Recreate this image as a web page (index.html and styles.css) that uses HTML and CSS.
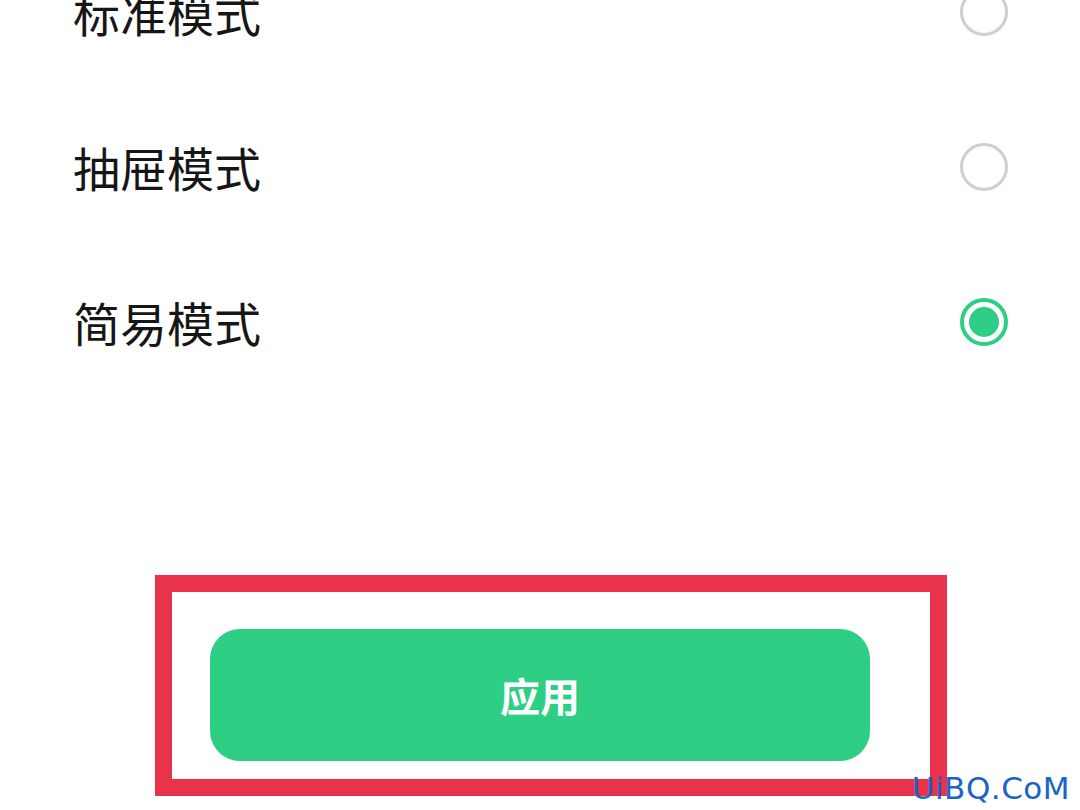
FILE: index.html
```html
<!DOCTYPE html>
<html lang="zh-CN">
<head>
    <meta charset="UTF-8">
    <title>模式选择</title>
    <link rel="stylesheet" href="styles.css">
</head>
<body>
    <div class="screen">
        <ul class="mode-list">
            <li class="mode-item">
                <span class="mode-name">标准模式</span>
                <span class="radio"></span>
            </li>
            <li class="mode-item">
                <span class="mode-name">抽屉模式</span>
                <span class="radio"></span>
            </li>
            <li class="mode-item">
                <span class="mode-name">简易模式</span>
                <span class="radio checked"></span>
            </li>
        </ul>

        <div class="apply-frame">
            <button class="apply-button">应用</button>
        </div>

        <div class="watermark">UiBQ.CoM</div>
    </div>
</body>
</html>
```

FILE: styles.css
```css
* {
    box-sizing: border-box;
    margin: 0;
    padding: 0;
}

body {
    background: #fff;
    font-family: "Noto Sans CJK SC", "Noto Sans", sans-serif;
    width: 1080px;
    height: 810px;
    overflow: hidden;
}

.screen {
    position: relative;
    height: 810px;
    overflow: hidden;
}

.mode-list {
    list-style: none;
    margin-top: -66px;
    padding: 0 72px 0 73px;
}

.mode-item {
    display: flex;
    justify-content: space-between;
    align-items: center;
    height: 155px;
}

.mode-name {
    font-size: 47px;
    color: #161616;
}

.radio {
    width: 48px;
    height: 48px;
    border-radius: 50%;
    border: 3px solid #cfcfcf;
    display: flex;
    align-items: center;
    justify-content: center;
}

.radio.checked {
    border: 4px solid #2ecf84;
}

.radio.checked::after {
    content: "";
    width: 30px;
    height: 30px;
    border-radius: 50%;
    background: #2ecf84;
}

.apply-frame {
    width: 792px;
    margin: 176px 0 0 155px;
    border: 17px solid #e8334a;
    padding: 37px 60px 18px 38px;
}

.apply-button {
    display: block;
    width: 660px;
    height: 132px;
    border: none;
    border-radius: 30px;
    background: #2ecf84;
    color: #fff;
    font-family: "Noto Sans CJK SC", sans-serif;
    font-size: 40px;
    font-weight: bold;
    cursor: pointer;
}

.watermark {
    position: absolute;
    right: 10px;
    bottom: 4px;
    font-family: "DejaVu Sans", sans-serif;
    font-size: 31px;
    line-height: 36px;
    color: #1a63c8;
    letter-spacing: 0.5px;
}
```
